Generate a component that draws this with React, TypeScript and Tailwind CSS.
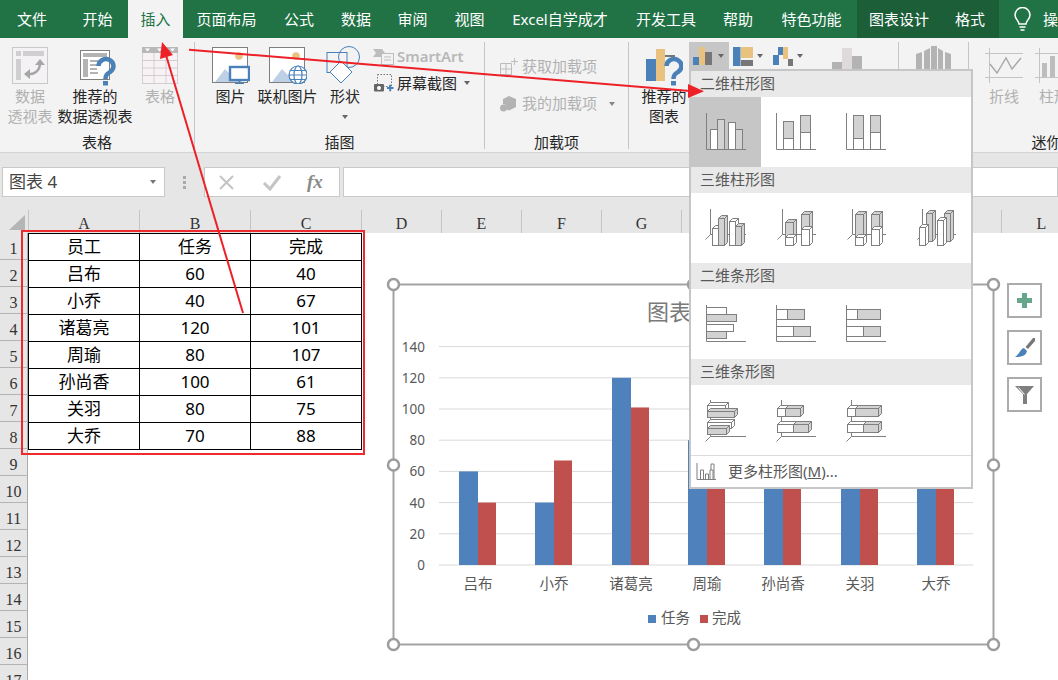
import React from 'react';

const tabs = [
  { label: '文件', w: 'w-[64px]' },
  { label: '开始', w: 'w-[64px] pl-[3px]' },
  { label: '插入', w: 'w-[55px] bg-[#f3f3f3] !text-[#217346]' },
  { label: '页面布局', w: 'w-[87px]' },
  { label: '公式', w: 'w-[58px]' },
  { label: '数据', w: 'w-[56px]' },
  { label: '审阅', w: 'w-[57px]' },
  { label: '视图', w: 'w-[57px]' },
  { label: 'Excel自学成才', w: 'w-[124px]' },
  { label: '开发工具', w: 'w-[88px]' },
  { label: '帮助', w: 'w-[56px]' },
  { label: '特色功能', w: 'w-[91px]' },
  { label: '图表设计', w: 'w-[84px] bg-[#1b5e38]' },
  { label: '格式', w: 'w-[58px] bg-[#1b5e38]' },
];

const rows = [
  ['员工', '任务', '完成'],
  ['吕布', '60', '40'],
  ['小乔', '40', '67'],
  ['诸葛亮', '120', '101'],
  ['周瑜', '80', '107'],
  ['孙尚香', '100', '61'],
  ['关羽', '80', '75'],
  ['大乔', '70', '88'],
];

const columns = [
  { name: 'A', w: 'w-[111px]' },
  { name: 'B', w: 'w-[111px]' },
  { name: 'C', w: 'w-[111px]' },
  { name: 'D', w: 'w-[80px]' },
  { name: 'E', w: 'w-[80px]' },
  { name: 'F', w: 'w-[80px]' },
  { name: 'G', w: 'w-[80px]' },
  { name: 'H', w: 'w-[80px]' },
  { name: 'I', w: 'w-[80px]' },
  { name: 'J', w: 'w-[80px]' },
  { name: 'K', w: 'w-[80px]' },
  { name: 'L', w: 'w-[80px]' },
];

const series = [
  { name: '吕布', a: 60, b: 40, c: 478 },
  { name: '小乔', a: 40, b: 67, c: 554 },
  { name: '诸葛亮', a: 120, b: 101, c: 631 },
  { name: '周瑜', a: 80, b: 107, c: 707 },
  { name: '孙尚香', a: 100, b: 61, c: 783 },
  { name: '关羽', a: 80, b: 75, c: 860 },
  { name: '大乔', a: 70, b: 88, c: 936 },
];

const LINE = '#7f7f7f';
const GRAY = '#d2d2d2';

function Caret({ color = 'border-t-[#666]' }: { color?: string }) {
  return <span className={`inline-block w-0 h-0 border-x-[3.5px] border-x-transparent border-t-[4px] ${color}`} />;
}

function Separator() {
  return <div className="w-px h-[107px] mt-[4px] bg-[#c6c6c6] shrink-0" />;
}

function Question({ x, y }: { x: number; y: number }) {
  return (
    <g transform={`translate(${x} ${y})`}>
      <path d="M1.5 7 a7.5 7 0 1 1 11.5 6 c-3 2 -4.5 3 -4.5 7" fill="none" stroke="#4a81b8" strokeWidth="4.5" />
      <rect x="6" y="22" width="5" height="4.5" fill="#4a81b8" />
    </g>
  );
}

function PivotIcon() {
  return (
    <svg width="36" height="37" viewBox="0 0 36 37" className="mt-px">
      <rect x="0.5" y="0.5" width="35" height="36" fill="#f5f2f5" stroke="#c9c9c9" />
      <rect x="4" y="4" width="5" height="5" fill="#cfcfcf" />
      <rect x="11" y="4" width="21" height="5" fill="#cfcfcf" />
      <rect x="4" y="12" width="5" height="21" fill="#cfcfcf" />
      <path d="M14 27 c8 1 14 -3 14 -11" fill="none" stroke="#a6a6a6" strokeWidth="2.5" />
      <path d="M23 18 l5 -6 l5 6z M18 22 l-6 5 l6 5z" fill="#a6a6a6" />
    </svg>
  );
}

function RecPivotIcon() {
  return (
    <svg width="36" height="37" viewBox="0 0 36 37" className="mt-[4px]">
      <rect x="0.5" y="0.5" width="29" height="29" fill="#fff" stroke="#7f7f7f" />
      <rect x="3" y="3" width="24" height="4" fill="#b3b3b3" />
      <rect x="3" y="9" width="5" height="18" fill="#b3b3b3" />
      <path d="M10 11 h8 M10 15 h7 M10 19 h7 M10 23 h8" stroke="#b3b3b3" strokeWidth="2" />
      <Question x={17} y={9} />
    </svg>
  );
}

function TableIcon() {
  return (
    <svg width="36" height="37" viewBox="0 0 36 37" className="mt-px">
      <rect x="0.5" y="0.5" width="35" height="36" fill="#f7f3f5" stroke="#d6cdd3" />
      <rect x="0" y="0" width="36" height="6" fill="#b8b8b8" />
      <path d="M3 1.5 h5 l-2.5 3z M15 1.5 h5 l-2.5 3z M28 1.5 h5 l-2.5 3z" fill="#fff" />
      <path d="M12 6 v30 M24 6 v30 M0 13.5 h36 M0 21 h36 M0 28.5 h36" stroke="#d6cdd3" />
    </svg>
  );
}

function PictureIcon({ online }: { online?: boolean }) {
  return (
    <svg width="38" height="37" viewBox="0 0 38 37" className="mt-px">
      <rect x="0.5" y="0.5" width="35" height="35" fill="#fff" stroke="#7f7f7f" />
      <circle cx="27" cy="9" r="3.8" fill="#e8c27e" />
      <path d="M3 35 l10 -13 l6 6 l4 -3 l7 10z" fill="#bdd0e6" />
      {online ? (
        <g fill="#fff" stroke="#4a81b8" strokeWidth="1.2">
          <circle cx="29" cy="28" r="9" />
          <ellipse cx="29" cy="28" rx="4" ry="9" />
          <path d="M20 28 h18 M21.5 23.5 h15 M21.5 32.5 h15" />
        </g>
      ) : (
        <g>
          <rect x="18" y="20" width="19" height="13" fill="#fff" stroke="#4a81b8" strokeWidth="2.4" />
          <path d="M27.5 33 v3 M23 36.5 h9" stroke="#4a81b8" strokeWidth="1.5" />
        </g>
      )}
    </svg>
  );
}

function ShapesIcon() {
  return (
    <svg width="38" height="38" viewBox="0 0 38 38">
      <circle cx="23" cy="11" r="10.5" fill="none" stroke="#4a81b8" />
      <rect x="1" y="6.5" width="20" height="20" fill="none" stroke="#4a81b8" />
      <path d="M15 15 l11 11 l-11 11 l-11 -11z" fill="#fff" stroke="#4a81b8" />
    </svg>
  );
}

function SmartArtIcon() {
  return (
    <svg width="21" height="17" viewBox="0 0 21 17">
      <path d="M0 1 h9 l3 4 l-3 4 h-9 l3 -4z" fill="#bdbdbd" />
      <rect x="8.5" y="5.5" width="12" height="11" fill="#f3f3f3" stroke="#bdbdbd" />
      <path d="M11 9 h7 M11 12 h7" stroke="#bdbdbd" />
    </svg>
  );
}

function ScreenshotIcon() {
  return (
    <svg width="20" height="18" viewBox="0 0 20 18">
      <rect x="3.5" y="0.5" width="14" height="12" fill="none" stroke="#777" strokeDasharray="1.5 1.5" />
      <rect x="0" y="10" width="10" height="7.5" rx="1" fill="#666" />
      <circle cx="5" cy="14" r="2" fill="#fff" />
      <path d="M13 14 h6.5 M16.2 10.7 v6.5" stroke="#4a81b8" strokeWidth="2" />
    </svg>
  );
}

function AddinStoreIcon() {
  return (
    <svg width="18" height="18" viewBox="0 0 18 18">
      <path d="M0.5 5.5 h11 v11 h-11z M6 5.5 v11 M0.5 11 h11 M14.5 0 v7 M11 3.5 h7" fill="none" stroke="#bdbdbd" />
    </svg>
  );
}

function MyAddinIcon() {
  return (
    <svg width="17" height="16" viewBox="0 0 17 16">
      <path d="M9 0 l7 3 v8 l-7 3.5 l-3 -1.5 v-4 l-3 -1 v-5z" fill="#b3b3b3" />
      <circle cx="3.5" cy="12" r="3.5" fill="#b3b3b3" />
    </svg>
  );
}

function RecChartIcon() {
  return (
    <svg width="37" height="37" viewBox="0 0 37 37" className="mt-[3px]">
      <rect x="0" y="10" width="10" height="22" fill="#4a81b8" />
      <rect x="10" y="0" width="9" height="32" fill="#e8c27e" />
      <rect x="19" y="6" width="10" height="2" fill="#777" />
      <Question x={19} y={10} />
    </svg>
  );
}

function ColumnMiniIcons() {
  return (
    <div className="flex items-start">
      <div className="w-[40px] h-[27px] mt-[4px] bg-[#c6c6c6] flex items-center pl-[4px] gap-[3px] shrink-0">
        <svg width="19" height="18" viewBox="0 0 19 18">
          <rect x="0" y="10" width="6" height="8" fill="#4a81b8" />
          <rect x="6" y="0" width="6" height="18" fill="#e8c27e" />
          <rect x="12" y="5" width="7" height="13" fill="#777" />
        </svg>
        <span className="ml-[3px] flex"><Caret /></span>
      </div>
      <div className="flex items-center gap-[4px] ml-[4px] mt-[8px] h-[20px] w-[36px] shrink-0">
        <svg width="20" height="19" viewBox="0 0 20 19">
          <rect x="0" y="0" width="7.5" height="19" fill="#4a81b8" />
          <rect x="8" y="0" width="12" height="11" fill="#e8c27e" />
          <rect x="8" y="13" width="12" height="6" fill="#777" />
        </svg>
        <Caret />
      </div>
      <div className="flex items-center gap-[4px] ml-[4px] mt-[8px] h-[20px] shrink-0">
        <svg width="20" height="19" viewBox="0 0 20 19">
          <rect x="0" y="8" width="6" height="10" fill="#4a81b8" />
          <rect x="5" y="0" width="5" height="8" fill="#4a81b8" />
          <rect x="10" y="0" width="5" height="12" fill="#e8c27e" />
          <rect x="15" y="12" width="5" height="7" fill="#777" />
        </svg>
        <Caret />
      </div>
    </div>
  );
}

function PivotChartIcon() {
  return (
    <svg width="39" height="40" viewBox="0 0 39 40">
      <rect x="0" y="14" width="10" height="26" fill="#b3b3b3" />
      <rect x="10" y="0" width="10" height="40" fill="#ded9dd" />
      <rect x="20" y="8" width="10" height="32" fill="#b3b3b3" />
    </svg>
  );
}

function MapIcon() {
  return (
    <svg width="35" height="40" viewBox="0 0 35 40">
      <path d="M0 8 l6 -2 v34 h-6z M8 5 l6 -3 v38 h-6z M15 0 h6 v40 h-6z M22 2 l5 3 v35 h-5z M29 6 l6 2 v32 h-6z" fill="#b3b3b3" />
    </svg>
  );
}

function SparkIcon({ bars }: { bars?: boolean }) {
  return (
    <svg width="38" height="35" viewBox="0 0 38 35" className="shrink-0 mt-[2px]">
      <path d="M4.5 0 v35 M0 5.5 h38 M0 29.5 h38" stroke="#c4c4c4" fill="none" />
      {bars ? (
        <g fill="#bdbdbd">
          <rect x="7" y="15" width="5" height="14" />
          <rect x="15" y="8" width="5" height="21" />
          <rect x="23" y="14" width="5" height="15" />
          <rect x="31" y="11" width="5" height="18" />
        </g>
      ) : (
        <path d="M5 16 l7 9 l9 -15 l6 11 l9 -11" fill="none" stroke="#a8a8a8" strokeWidth="1.4" />
      )}
    </svg>
  );
}

function BigButton({ w, icon, lines, muted }: { w: string; icon: React.ReactNode; lines: string[]; muted?: boolean }) {
  return (
    <div className={`${w} flex flex-col items-center whitespace-nowrap shrink-0 ${muted ? 'text-[#b1b1b1]' : 'text-[#262626]'}`}>
      <div className="h-[41px] flex items-start justify-center">{icon}</div>
      {lines.map((l) => (
        <div key={l} className="leading-[19.5px]">{l}</div>
      ))}
    </div>
  );
}

function Group({ w, label, className = '', children }: { w: string; label?: string; className?: string; children: React.ReactNode }) {
  return (
    <div className={`${w} shrink-0 flex flex-col`}>
      <div className={`h-[95px] pt-[8px] flex items-start ${className}`}>{children}</div>
      <div className="h-[18px] leading-[18px] text-center text-[#262626] whitespace-nowrap">{label}</div>
    </div>
  );
}

function Ribbon() {
  return (
    <div className="h-[115px] bg-[#f3f3f3] border-b border-[#d4d4d4] flex items-start text-[15px] overflow-hidden shrink-0">
      <Group w="w-[194px]" label="表格">
        <BigButton w="w-[60px]" muted icon={<PivotIcon />} lines={['数据', '透视表']} />
        <BigButton w="w-[70px]" icon={<div className="pl-[6px]"><RecPivotIcon /></div>} lines={['推荐的', '数据透视表']} />
        <BigButton w="w-[60px]" muted icon={<TableIcon />} lines={['表格']} />
      </Group>
      <Separator />
      <Group w="w-[289px]" label="插图" className="pl-[8px]">
        <BigButton w="w-[55px]" icon={<div className="pl-[1px]"><PictureIcon /></div>} lines={['图片']} />
        <BigButton w="w-[59px]" icon={<PictureIcon online />} lines={['联机图片']} />
        <div className="w-[56px] flex flex-col items-center shrink-0 text-[#262626]">
          <div className="h-[41px]"><ShapesIcon /></div>
          <div className="leading-[19.5px]">形状</div>
          <div className="mt-[8px] flex"><Caret /></div>
        </div>
        <div className="flex flex-col -mt-[3px]">
          <div className="h-[27px] flex items-center gap-[3px] text-[#b8b8b8] font-semibold">
            <SmartArtIcon />
            <span>SmartArt</span>
          </div>
          <div className="h-[26px] flex items-center gap-[3px] text-[#262626] whitespace-nowrap">
            <span className="pl-[1px] flex"><ScreenshotIcon /></span>
            <span>屏幕截图</span>
            <span className="flex ml-[4px]"><Caret /></span>
          </div>
        </div>
      </Group>
      <Separator />
      <Group w="w-[143px]" label="加载项" className="pl-[15px]">
        <div className="flex flex-col mt-[2px] text-[#b1b1b1] whitespace-nowrap">
          <div className="h-[37px] flex items-center gap-[4px]">
            <AddinStoreIcon />
            <span>获取加载项</span>
          </div>
          <div className="h-[37px] flex items-center gap-[5px]">
            <MyAddinIcon />
            <span>我的加载项</span>
            <span className="flex ml-[7px]"><Caret color="border-t-[#888]" /></span>
          </div>
        </div>
      </Group>
      <Separator />
      <Group w="w-[269px]" label="图表" className="!pt-0">
        <div className="pl-[10px] pt-[8px]">
          <BigButton w="w-[50px]" icon={<RecChartIcon />} lines={['推荐的', '图表']} />
        </div>
        <ColumnMiniIcons />
        <div className="ml-[29px] pt-[10px]"><PivotChartIcon /></div>
      </Group>
      <Separator />
      <Group w="w-[69px]" className="pl-[17px]">
        <MapIcon />
      </Group>
      <Separator />
      <Group w="w-[170px]" label="迷你图" className="pl-[16px] gap-[12px]">
        <BigButton w="w-[38px]" muted icon={<SparkIcon />} lines={['折线']} />
        <BigButton w="w-[38px]" muted icon={<SparkIcon bars />} lines={['柱形']} />
      </Group>
    </div>
  );
}

function FormulaBar() {
  return (
    <div className="h-[57px] pt-[14px] flex items-start shrink-0">
      <div className="ml-[2px] w-[163px] h-[30px] bg-white border border-[#c9c9c9] flex items-center justify-between pl-[6px] pr-[8px] text-[17px] text-[#444]">
        <span>图表 4</span>
        <Caret color="border-t-[#777]" />
      </div>
      <div className="w-[39px] h-[30px] flex flex-col items-center justify-center gap-[2px]">
        <span className="w-[3px] h-[3px] bg-[#aaa]" />
        <span className="w-[3px] h-[3px] bg-[#aaa]" />
        <span className="w-[3px] h-[3px] bg-[#aaa]" />
      </div>
      <div className="w-[136px] h-[30px] bg-white border border-[#c9c9c9] flex items-center text-[#bbb]">
        <svg width="44" height="28" viewBox="0 0 44 28">
          <path d="M15 8 l13 13 M28 8 l-13 13" stroke="#c4c4c4" strokeWidth="2" />
        </svg>
        <svg width="46" height="28" viewBox="0 0 46 28">
          <path d="M15 15 l6 6 l10 -13" fill="none" stroke="#c4c4c4" strokeWidth="3" />
        </svg>
        <span className="font-['Liberation_Serif',serif] italic font-bold text-[19px] text-[#8a8a8a] ml-[12px]">fx</span>
      </div>
      <div className="ml-[3px] flex-1 h-[30px] bg-white border border-[#c9c9c9]" />
    </div>
  );
}

function SheetHeader() {
  return (
    <div className="h-[23px] flex bg-[#e6e6e6] shrink-0 font-['Liberation_Serif',serif] text-[16px] text-[#333]">
      <div className="w-[29px] border-r border-[#c4c4c4] shrink-0 relative">
        <svg width="26" height="22" viewBox="0 0 26 22" className="absolute top-0 left-0">
          <path d="M9 20 L25 5 V20z" fill="#b5b5b5" />
        </svg>
      </div>
      {columns.map((c) => (
        <div key={c.name} className={`${c.w} shrink-0 border-r border-[#c4c4c4] text-center leading-[28px]`}>
          {c.name}
        </div>
      ))}
    </div>
  );
}

function Sheet() {
  const rowNumbers = Array.from({ length: 17 }, (_, i) => i + 1);
  return (
    <div className="flex flex-1 min-h-0">
      <div className="w-[28px] bg-[#e6e6e6] border-r border-[#ababab] shrink-0 font-['Liberation_Serif',serif] text-[16px] text-[#333]">
        {rowNumbers.map((n) => (
          <div key={n} className="h-[27px] border-b border-[#b4b4b4] text-center leading-[31px]">
            {n}
          </div>
        ))}
      </div>
      <div className="flex-1 bg-white">
        <div className="w-[334px] border-t border-l border-black text-[17px] text-black">
          {rows.map((row) => (
            <div key={row[0]} className="flex h-[27px]">
              {row.map((cell, i) => (
                <div key={i} className="w-[111px] border-r border-b border-black flex items-center justify-center">
                  {cell}
                </div>
              ))}
            </div>
          ))}
        </div>
      </div>
    </div>
  );
}

function ChartCanvas() {
  const y0 = 565;
  const unit = 1.56;
  const handles = [
    [393.5, 284.5],
    [693.5, 284.5],
    [993.5, 284.5],
    [393.5, 465],
    [993.5, 465],
    [393.5, 644.5],
    [693.5, 644.5],
    [993.5, 644.5],
  ];
  return (
    <svg width="640" height="390" viewBox="380 270 640 390" className="absolute left-[380px] top-[270px]">
      <rect x="393.5" y="284.5" width="600" height="360" fill="#fff" stroke="#a3a3a3" strokeWidth="2" />
      <text x="691" y="320" textAnchor="middle" fontSize="22" fill="#7a7a7a">图表标题</text>
      {[0, 20, 40, 60, 80, 100, 120, 140].map((v) => (
        <g key={v}>
          <line x1="439" x2="973" y1={y0 - v * unit} y2={y0 - v * unit} stroke="#d9d9d9" strokeWidth="1" />
          <text x="425" y={y0 - v * unit + 5} textAnchor="end" fontSize="13.5" fill="#595959">{v}</text>
        </g>
      ))}
      {series.map((s) => (
        <g key={s.name}>
          <rect x={s.c - 19} y={y0 - s.a * unit} width="19" height={s.a * unit} fill="#4f81bd" />
          <rect x={s.c} y={y0 - s.b * unit} width="18" height={s.b * unit} fill="#c0504d" />
          <text x={s.c} y="589" textAnchor="middle" fontSize="14.5" fill="#595959">{s.name}</text>
        </g>
      ))}
      <rect x="648" y="615" width="8" height="8" fill="#4f81bd" />
      <text x="661" y="623" fontSize="14.5" fill="#595959">任务</text>
      <rect x="700" y="615" width="8" height="8" fill="#c0504d" />
      <text x="712" y="623" fontSize="14.5" fill="#595959">完成</text>
      {handles.map(([x, y]) => (
        <circle key={`${x}-${y}`} cx={x} cy={y} r="5.5" fill="#fff" stroke="#9c9c9c" strokeWidth="2.5" />
      ))}
    </svg>
  );
}

function ChartTools() {
  return (
    <div className="absolute left-[1007px] top-[283px] flex flex-col gap-[12px]">
      <div className="w-[35px] h-[35px] bg-white border-2 border-[#ababab] flex items-center justify-center">
        <svg width="15" height="15" viewBox="0 0 15 15">
          <path d="M5 0 h5 v5 h5 v5 h-5 v5 h-5 v-5 h-5 v-5 h5z" fill="#68a58d" />
        </svg>
      </div>
      <div className="w-[35px] h-[35px] bg-white border-2 border-[#ababab] flex items-center justify-center">
        <svg width="20" height="20" viewBox="0 0 20 20">
          <path d="M18 0 h2 v3 l-7 8 l-2.5 -2z" fill="#777" />
          <path d="M9 10 l3 3 c-1 5 -6 6 -12 6 c4 -2 5 -8 9 -9z" fill="#4a81b8" />
        </svg>
      </div>
      <div className="w-[35px] h-[35px] bg-white border-2 border-[#ababab] flex items-center justify-center">
        <svg width="19" height="18" viewBox="0 0 19 18">
          <path d="M0 0 h19 l-7 8 v10 h-4 v-10z" fill="#7f7f7f" />
          <path d="M3.5 1.5 l6 7" stroke="#fff" strokeWidth="1" />
        </svg>
      </div>
    </div>
  );
}

function Box3D({ x, y, w, h, fill, d = 3 }: { x: number; y: number; w: number; h: number; fill: string; d?: number }) {
  return (
    <g fill={fill} stroke={LINE}>
      <path d={`M${x} ${y} l${d} ${-d} h${w} l${-d} ${d}z`} />
      <path d={`M${x + w} ${y} l${d} ${-d} v${h} l${-d} ${d}z`} />
      <rect x={x} y={y} width={w} height={h} />
    </g>
  );
}

function Rects({ items }: { items: number[][] }) {
  return (
    <g stroke={LINE}>
      {items.map(([x, y, w, h, gray], i) => (
        <rect key={i} x={x} y={y} width={w} height={h} fill={gray ? GRAY : '#fff'} />
      ))}
    </g>
  );
}

function Axis2D() {
  return <path d="M15.5 16 V52.5 H55" fill="none" stroke={LINE} />;
}

function Axis3D({ x = 19.5, y = 41.5, top = 16 }: { x?: number; y?: number; top?: number }) {
  return <path d={`M${x} ${top} V${y} H55 M${x} ${y} L${x - 5} ${y + 5}`} fill="none" stroke={LINE} />;
}

const columnTiles = [
  <>
    <Axis2D />
    <Rects items={[[19.5, 32.5, 7, 20, 0], [26.5, 22.5, 7, 30, 1], [37.5, 25.5, 7, 27, 0], [44.5, 32.5, 7, 20, 1]]} />
  </>,
  <>
    <Axis2D />
    <Rects items={[[22.5, 24.5, 10, 17, 1], [22.5, 41.5, 10, 11, 0], [39.5, 18.5, 10, 17, 1], [39.5, 35.5, 10, 17, 0]]} />
  </>,
  <>
    <Axis2D />
    <Rects items={[[22.5, 18.5, 10, 23, 1], [22.5, 41.5, 10, 11, 0], [39.5, 18.5, 10, 17, 1], [39.5, 35.5, 10, 17, 0]]} />
  </>,
];

const column3dTiles = [
  <>
    <Axis3D x={19.5} />
    <Box3D x={21.5} y={35.5} w={6} h={17} fill="#fff" />
    <Box3D x={27.5} y={25.5} w={6} h={27} fill={GRAY} />
    <Box3D x={38.5} y={28.5} w={6} h={24} fill="#fff" />
    <Box3D x={44.5} y={33.5} w={6} h={19} fill={GRAY} />
  </>,
  <>
    <Axis3D x={21.5} />
    <Box3D x={24.5} y={29.5} w={8} h={15} fill={GRAY} />
    <Box3D x={24.5} y={44.5} w={8} h={8} fill="#fff" />
    <Box3D x={40.5} y={21.5} w={8} h={15} fill={GRAY} />
    <Box3D x={40.5} y={36.5} w={8} h={16} fill="#fff" />
  </>,
  <>
    <Axis3D x={21.5} />
    <Box3D x={24.5} y={21.5} w={8} h={23} fill={GRAY} />
    <Box3D x={24.5} y={44.5} w={8} h={8} fill="#fff" />
    <Box3D x={40.5} y={21.5} w={8} h={15} fill={GRAY} />
    <Box3D x={40.5} y={36.5} w={8} h={16} fill="#fff" />
  </>,
  <>
    <Axis3D x={21.5} />
    <Box3D x={25.5} y={20.5} w={6} h={28} fill={GRAY} />
    <Box3D x={43.5} y={20.5} w={6} h={28} fill={GRAY} />
    <Box3D x={18.5} y={34.5} w={6} h={18} fill="#fff" />
    <Box3D x={36.5} y={27.5} w={6} h={25} fill="#fff" />
  </>,
];

const barTiles = [
  <>
    <Axis2D />
    <Rects items={[[15.5, 18.5, 20, 7, 0], [15.5, 25.5, 30, 7, 1], [15.5, 35.5, 27, 7, 0], [15.5, 42.5, 20, 7, 1]]} />
  </>,
  <>
    <Axis2D />
    <Rects items={[[15.5, 20.5, 11, 10, 0], [26.5, 20.5, 17, 10, 1], [15.5, 37.5, 17, 10, 0], [32.5, 37.5, 17, 10, 1]]} />
  </>,
  <>
    <Axis2D />
    <Rects items={[[15.5, 20.5, 11, 10, 0], [26.5, 20.5, 23, 10, 1], [15.5, 37.5, 17, 10, 0], [32.5, 37.5, 17, 10, 1]]} />
  </>,
];

const bar3dTiles = [
  <>
    <Axis3D x={19.5} y={51.5} top={15} />
    <Box3D x={16.5} y={20.5} w={18} h={6} fill="#fff" />
    <Box3D x={16.5} y={26.5} w={27} h={6} fill={GRAY} />
    <Box3D x={16.5} y={37.5} w={24} h={6} fill="#fff" />
    <Box3D x={16.5} y={43.5} w={19} h={6} fill={GRAY} />
  </>,
  <>
    <Axis3D x={20.5} y={51.5} top={15} />
    <Box3D x={16.5} y={23.5} w={8} h={8} fill="#fff" />
    <Box3D x={24.5} y={23.5} w={15} h={8} fill={GRAY} />
    <Box3D x={16.5} y={39.5} w={16} h={8} fill="#fff" />
    <Box3D x={32.5} y={39.5} w={15} h={8} fill={GRAY} />
  </>,
  <>
    <Axis3D x={20.5} y={51.5} top={15} />
    <Box3D x={16.5} y={23.5} w={8} h={8} fill="#fff" />
    <Box3D x={24.5} y={23.5} w={23} h={8} fill={GRAY} />
    <Box3D x={16.5} y={39.5} w={16} h={8} fill="#fff" />
    <Box3D x={32.5} y={39.5} w={15} h={8} fill={GRAY} />
  </>,
];

const menuSections = [
  { title: '二维柱形图', tiles: columnTiles },
  { title: '三维柱形图', tiles: column3dTiles },
  { title: '二维条形图', tiles: barTiles },
  { title: '三维条形图', tiles: bar3dTiles },
];

function ChartMenu() {
  return (
    <div className="absolute left-[689px] top-[69px] w-[284px] h-[420px] bg-white border-2 border-[#c6c6c6] text-[15px]">
      {menuSections.map((section, s) => (
        <div key={section.title}>
          <div className="h-[26px] bg-[#e9e9e9] pl-[9px] leading-[24px] text-[#595959]">{section.title}</div>
          <div className="flex h-[70px]">
            {section.tiles.map((tile, t) => (
              <div key={t} className={`w-[70px] h-[70px] ${s === 0 && t === 0 ? 'bg-[#c6c6c6]' : ''}`}>
                <svg width="70" height="70" viewBox="0 0 70 70">{tile}</svg>
              </div>
            ))}
          </div>
        </div>
      ))}
      <div className="border-t border-[#dcdcdc] h-[32px] flex items-center text-[#595959]">
        <svg width="20" height="17" viewBox="0 0 20 17" className="ml-[5px] mr-[12px]">
          <path d="M1 0 v16.5 H20" fill="none" stroke={LINE} />
          <path d="M4.5 16 v-9 h3 v9 M9.5 16 v-5 h3 v5 M14 16 v-9 h3 v9" fill="none" stroke={LINE} />
          <path d="M15 7 V1 h3 v15" fill="none" stroke={LINE} />
        </svg>
        <span>更多柱形图(<span className="underline">M</span>)...</span>
      </div>
    </div>
  );
}

function Annotations() {
  return (
    <>
      <div className="absolute left-[21px] top-[230px] w-[344px] h-[225px] border-2 border-[#ee2a2f]" />
      <svg width="1058" height="680" viewBox="0 0 1058 680" className="absolute left-0 top-0 pointer-events-none">
        <line x1="189" y1="49.7" x2="690" y2="91" stroke="#ed2027" strokeWidth="2" />
        <polygon points="704,91.3 688,84 688,98" fill="#ed2027" />
        <line x1="243" y1="313" x2="166" y2="55" stroke="#ed2027" strokeWidth="2" />
        <polygon points="162,42 173,55 160,59" fill="#ed2027" />
      </svg>
    </>
  );
}

export default function App() {
  return (
    <div className="relative w-[1058px] h-[680px] overflow-hidden bg-[#e6e6e6] flex flex-col font-['Noto_Sans','Noto_Sans_CJK_SC',sans-serif]">
      {/* Tabs */}
      <div className="h-[38px] bg-[#217346] flex items-stretch text-[15px] text-white shrink-0">
        {tabs.map((t) => (
          <div key={t.label} className={`${t.w} shrink-0 flex items-center justify-center whitespace-nowrap`}>
            {t.label}
          </div>
        ))}
        <div className="flex items-center pl-[15px] gap-[12px] whitespace-nowrap">
          <svg width="17" height="24" viewBox="0 0 17 24">
            <path d="M5 17 c0 -3 -4 -5 -4 -9 a7.5 7.5 0 0 1 15 0 c0 4 -4 6 -4 9z" fill="none" stroke="#fff" strokeWidth="1.5" />
            <path d="M5.5 20 h6 M6.5 23 h4" stroke="#fff" strokeWidth="1.5" />
          </svg>
          <span>操作说明搜索</span>
        </div>
      </div>

      <Ribbon />
      <FormulaBar />
      <SheetHeader />
      <Sheet />

      <ChartCanvas />
      <ChartTools />
      <ChartMenu />
      <Annotations />
    </div>
  );
}
